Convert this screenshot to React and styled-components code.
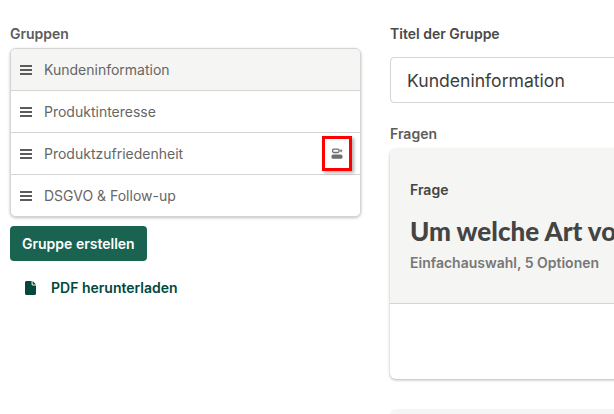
import React from "react";
import styled, { createGlobalStyle } from "styled-components";

const GlobalStyle = createGlobalStyle`
  html, body {
    margin: 0;
    padding: 0;
    background: #fff;
    overflow: hidden;
  }
  body {
    font-family: Inter, "Liberation Sans", sans-serif;
  }
`;

const Page = styled.div`
  display: grid;
  grid-template-columns: 351px 700px;
  column-gap: 29px;
  width: 614px;
  height: 414px;
  padding: 25px 0 0 10px;
  box-sizing: border-box;
  overflow: hidden;
`;

const Column = styled.div`
  display: flex;
  flex-direction: column;
`;

const Label = styled.div`
  font-size: 14px;
  line-height: 18px;
  font-weight: 600;
  color: ${(p) => p.$color || "#5c5c5c"};
  margin-top: ${(p) => p.$top || 0}px;
  margin-bottom: ${(p) => p.$gap || 5}px;
`;

const GroupList = styled.div`
  border: 1px solid #d4d4d4;
  border-radius: 6px;
  box-shadow: 0 1px 3px rgba(0, 0, 0, 0.25);
  overflow: hidden;
  background: #fff;
`;

const GroupRow = styled.div`
  display: flex;
  align-items: center;
  height: 41px;
  padding: 0 8px 0 9px;
  background: ${(p) => (p.$active ? "#f5f5f3" : "#fff")};
  border-top: ${(p) => (p.$first ? "none" : "1px solid #d4d4d4")};
`;

const Handle = styled.svg`
  width: 12px;
  height: 10px;
  margin-right: 12px;
  flex: none;
`;

const GroupName = styled.span`
  flex: 1;
  font-size: 14px;
  color: #666;
`;

const Highlight = styled.div`
  display: flex;
  align-items: center;
  justify-content: center;
  width: 30px;
  height: 35px;
  box-sizing: border-box;
  border: 3px solid #f00;
  box-shadow: 2px 2px 3px rgba(0, 0, 0, 0.3);
`;

const CreateButton = styled.button`
  align-self: flex-start;
  height: 35px;
  margin-top: 9px;
  padding: 0 12px;
  border: none;
  border-radius: 4px;
  background: #1a6350;
  color: #fff;
  font-family: inherit;
  font-size: 14px;
  font-weight: 600;
`;

const DownloadLink = styled.a`
  display: flex;
  align-items: center;
  gap: 15px;
  margin: 18px 0 0 15px;
  font-size: 14px;
  font-weight: 600;
  color: #02483c;
`;

const TitleInput = styled.div`
  display: flex;
  align-items: center;
  height: 44px;
  padding-left: 16px;
  border: 1px solid #d4d4d4;
  border-radius: 4px;
  font-size: 17.6px;
  color: #3d3d3d;
`;

const QuestionCard = styled.div`
  border-radius: 6px;
  box-shadow: 0 1px 3px rgba(0, 0, 0, 0.3);
  overflow: hidden;
  background: #fff;
`;

const CardHead = styled.div`
  height: 155px;
  box-sizing: border-box;
  padding: 32px 20px 0;
  background: #f5f5f3;
  border-bottom: 1px solid #d4d4d4;
`;

const CardLabel = styled.div`
  font-size: 14px;
  line-height: 18px;
  font-weight: 600;
  color: #444;
`;

const Question = styled.div`
  margin-top: 17px;
  font-family: Lato, "Open Sans", sans-serif;
  font-size: 26px;
  line-height: 30px;
  font-weight: 900;
  color: #444;
  white-space: nowrap;
`;

const Meta = styled.div`
  margin-top: 8px;
  font-size: 14px;
  line-height: 17px;
  font-weight: 600;
  color: #777;
`;

const CardBody = styled.div`
  height: 75px;
`;

const NextCard = styled.div`
  height: 30px;
  margin-top: 30px;
  background: #f5f5f3;
  border-radius: 6px 6px 0 0;
`;

const groups = ["Kundeninformation", "Produktinteresse", "Produktzufriedenheit", "DSGVO & Follow-up"];

function HandleIcon() {
  return (
    <Handle viewBox="0 0 12 10" fill="#5c5c5c">
      <rect y="0" width="12" height="2" />
      <rect y="4" width="12" height="2" />
      <rect y="8" width="12" height="2" />
    </Handle>
  );
}

function ConvertIcon() {
  return (
    <svg width="12" height="12" viewBox="0 0 12 12" fill="none">
      <rect x="1.6" y="1.1" width="6.4" height="3.4" rx="1.2" stroke="#6e6e6e" strokeWidth="1.3" />
      <path d="M8.6 2.8h2.8M10 1.4v2.8" stroke="#6e6e6e" strokeWidth="1" />
      <rect x="0.5" y="6.4" width="11" height="4.4" rx="1.6" fill="#6e6e6e" />
    </svg>
  );
}

function FileIcon() {
  return (
    <svg width="11" height="14" viewBox="0 0 11 14">
      <path d="M1.5 0H6.6V3.2C6.6 3.9 7.1 4.4 7.8 4.4H11V12.5C11 13.3 10.3 14 9.5 14H1.5C.7 14 0 13.3 0 12.5V1.5C0 .7.7 0 1.5 0ZM7.6 0 11 3.4H7.6Z" fill="#02483c" />
    </svg>
  );
}

export default function App() {
  return (
    <>
      <GlobalStyle />
      <Page>
        <Column>
          <Label>Gruppen</Label>
          <GroupList>
            {groups.map((name, i) => (
              <GroupRow key={name} $active={i === 0} $first={i === 0}>
                <HandleIcon />
                <GroupName>{name}</GroupName>
                {i === 2 && (
                  <Highlight>
                    <ConvertIcon />
                  </Highlight>
                )}
              </GroupRow>
            ))}
          </GroupList>
          <CreateButton>Gruppe erstellen</CreateButton>
          <DownloadLink>
            <FileIcon />
            PDF herunterladen
          </DownloadLink>
        </Column>
        <Column>
          <Label $color="#4a4a4a" $gap={14}>Titel der Gruppe</Label>
          <TitleInput>Kundeninformation</TitleInput>
          <Label $top={22} $gap={6}>Fragen</Label>
          <QuestionCard>
            <CardHead>
              <CardLabel>Frage</CardLabel>
              <Question>Um welche Art von Produkt handelt es sich?</Question>
              <Meta>Einfachauswahl, 5 Optionen</Meta>
            </CardHead>
            <CardBody />
          </QuestionCard>
          <NextCard />
        </Column>
      </Page>
    </>
  );
}
